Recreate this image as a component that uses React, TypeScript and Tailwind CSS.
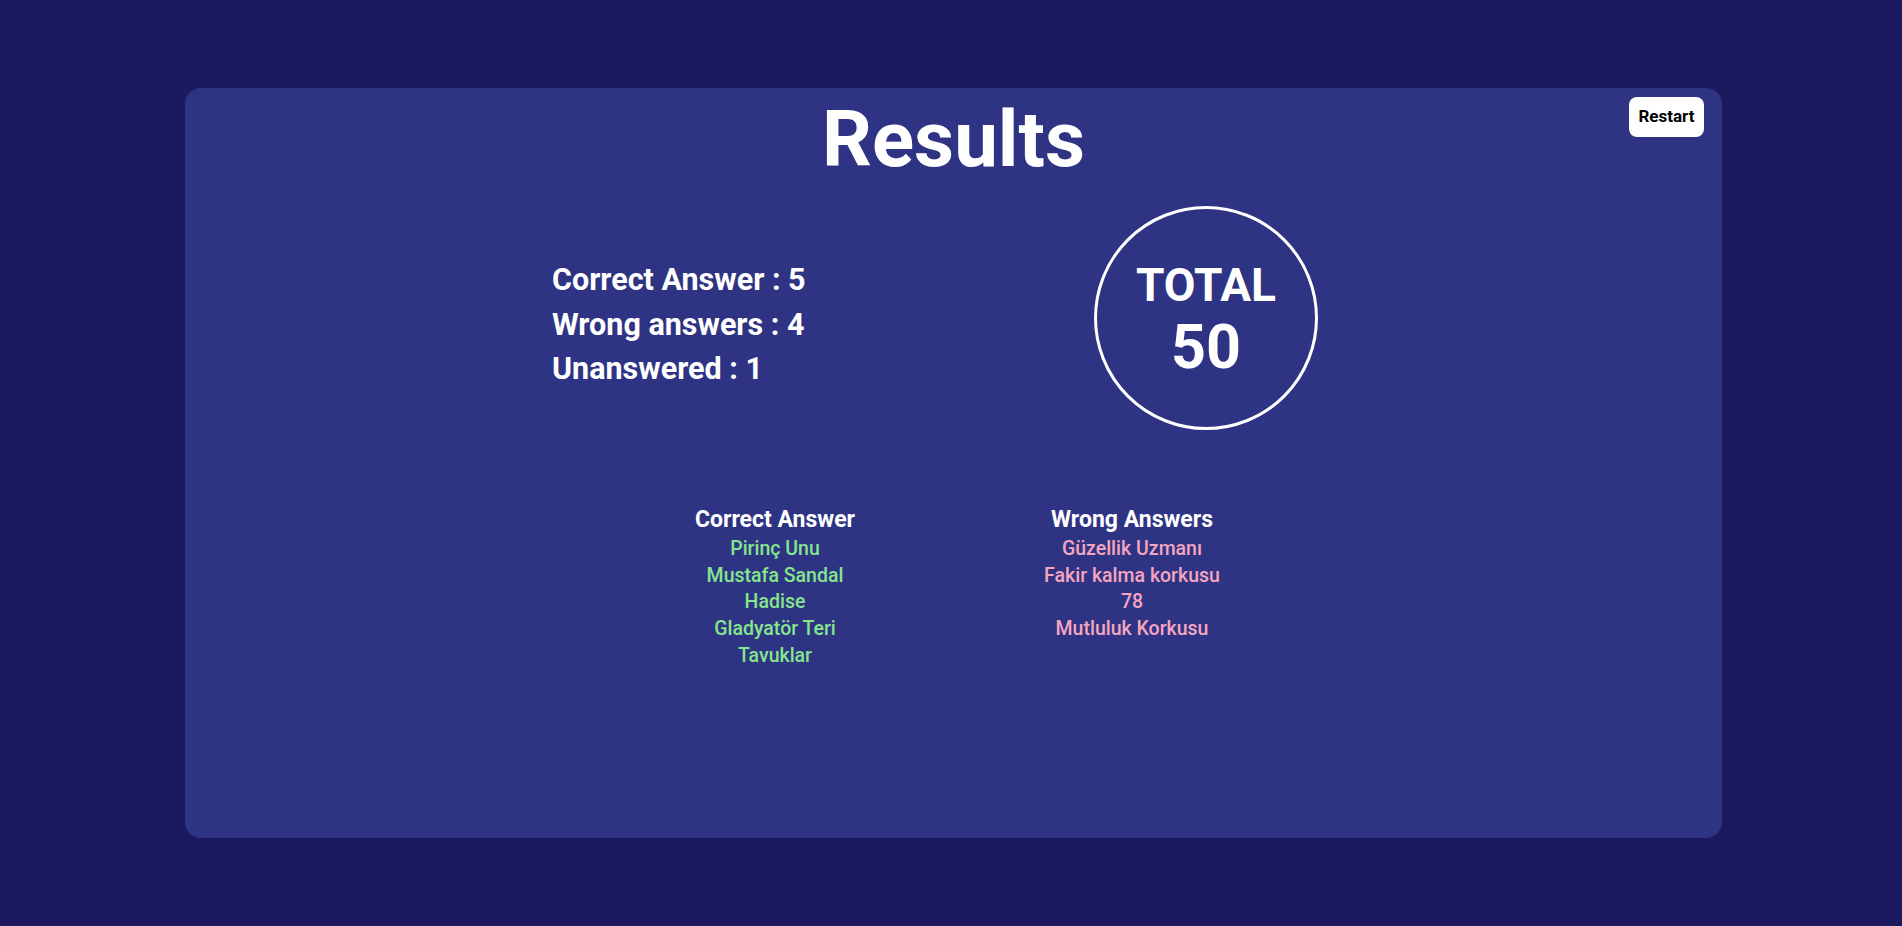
import React from "react";

const correct = ["Pirinç Unu", "Mustafa Sandal", "Hadise", "Gladyatör Teri", "Tavuklar"];
const wrong = ["Güzellik Uzmanı", "Fakir kalma korkusu", "78", "Mutluluk Korkusu"];

export default function App() {
  return (
    <div
      className="w-[1902px] h-[926px] bg-[#1c1a5e] flex items-center"
      style={{ fontFamily: "Roboto, 'Noto Sans', sans-serif" }}
    >
      <div className="relative ml-[185px] w-[1537px] h-[750px] rounded-2xl bg-[#2e3483] text-white">
        <button className="absolute top-[9px] right-[18px] w-[75px] h-[40px] rounded-lg bg-white text-black text-[17px] font-bold">
          Restart
        </button>
        <h1 className="pt-[8px] text-center text-[78px] leading-[88px] font-bold">Results</h1>
        <div className="mt-[22px] flex items-start">
          <div className="ml-[367px] mt-[52px] w-[542px] flex flex-col text-[30.5px] leading-[44.5px] font-bold">
            <div>Correct Answer : 5</div>
            <div>Wrong answers : 4</div>
            <div>Unanswered : 1</div>
          </div>
          <div className="w-[224px] h-[224px] rounded-full border-[3px] border-white flex flex-col items-center justify-center font-bold">
            <div className="text-[46px] leading-[54px] mt-[1px]">TOTAL</div>
            <div className="text-[61px] leading-[66px] mt-[2px]">50</div>
          </div>
        </div>
        <div className="mt-[74px] flex justify-center">
          <div className="w-[357px] flex flex-col items-center">
            <div className="text-[23px] leading-[32px] font-bold">Correct Answer</div>
            {correct.map((c) => (
              <div key={c} className="text-[19.5px] leading-[26.7px] font-medium text-[#84e58c]">
                {c}
              </div>
            ))}
          </div>
          <div className="w-[357px] flex flex-col items-center">
            <div className="text-[23px] leading-[32px] font-bold">Wrong Answers</div>
            {wrong.map((c) => (
              <div key={c} className="text-[19.5px] leading-[26.7px] font-medium text-[#f5a5c0]">
                {c}
              </div>
            ))}
          </div>
        </div>
      </div>
    </div>
  );
}
